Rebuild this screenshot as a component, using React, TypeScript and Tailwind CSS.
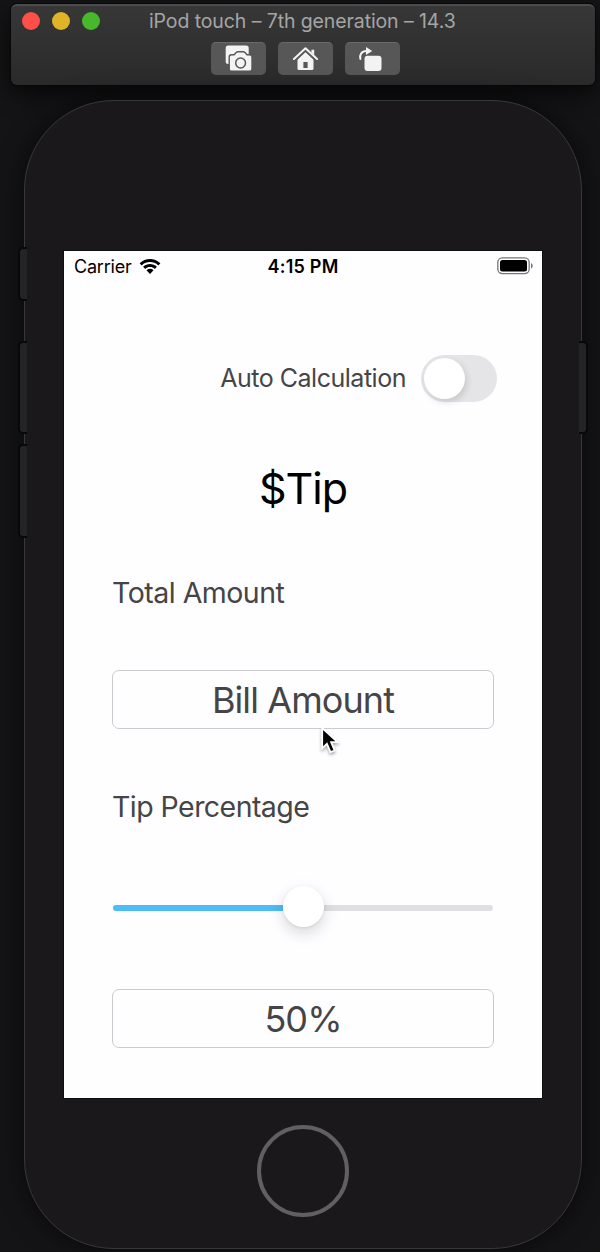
import React from "react";

function TrafficLights() {
  return (
    <div className="flex w-[78px] gap-3">
      <span className="size-[18px] rounded-full bg-[#fe4f48]" />
      <span className="size-[18px] rounded-full bg-[#e1b427]" />
      <span className="size-[18px] rounded-full bg-[#46b82a]" />
    </div>
  );
}

function ToolButton({ children }: { children: React.ReactNode }) {
  return (
    <button className="flex h-[33px] w-[55px] items-center justify-center rounded-[5px] border-t border-[#6a6a6b] bg-[#575758]">
      {children}
    </button>
  );
}

function ScreenshotIcon() {
  return (
    <svg className="-mt-px h-[33px] w-[55px]" viewBox="0 0 55 33">
      <rect x="14.7" y="3.500" width="23" height="18.500" rx="2.500" fill="#f3f3f3" />
      <path
        d="M20.600 12.700h2.600l2-2.100q.7-.8 1.700-.8h5.400q1 0 1.700.8l2 2.100h2.600q2.400 0 2.400 2.400v11.800q0 2.400-2.400 2.400h-18q-2.400 0-2.400-2.400V15.100q0-2.400 2.400-2.400Z"
        fill="#f3f3f3"
        stroke="#575758"
        strokeWidth="1.400"
      />
      <circle cx="29.600" cy="21" r="4.900" fill="none" stroke="#575758" strokeWidth="1.500" />
    </svg>
  );
}

function HomeIcon() {
  return (
    <svg className="-mt-px h-[33px] w-[55px]" viewBox="0 0 55 33">
      <path d="M33.400 7.800h2.800v7l-2.800-2.500Z" fill="#f3f3f3" />
      <path d="M27.500 9.600 19.500 17v9.400q0 1.600 1.600 1.600h12.800q1.600 0 1.600-1.600V17Z" fill="#f3f3f3" />
      <path d="m16 18.400 11.500-10.600L39 18.400" fill="none" stroke="#575758" strokeWidth="3.600" />
      <path d="m15.900 17 11.600-10.700L39.100 17" fill="none" stroke="#f3f3f3" strokeWidth="2" strokeLinecap="round" strokeLinejoin="round" />
      <rect x="25.400" y="20" width="4.200" height="6" fill="#575758" />
    </svg>
  );
}

function RotateIcon() {
  return (
    <svg className="-mt-px h-[33px] w-[55px]" viewBox="0 0 55 33">
      <rect x="19.500" y="13.700" width="17" height="15.300" rx="3" fill="#f3f3f3" />
      <path d="M15.400 17c-1-4.500 1.200-8 6-8" fill="none" stroke="#f3f3f3" strokeWidth="2" strokeLinecap="round" />
      <path d="M21 5v8l6.200-4Z" fill="#f3f3f3" />
    </svg>
  );
}

function Toolbar() {
  return (
    <header className="mt-[4px] ml-[11px] h-[81px] w-[584px] rounded-[6px] border-t-2 border-[#4b4b4c] bg-linear-to-b from-[#373738] to-[#2a2a2b] shadow-[0_0_0_1px_#070708,0_8px_22px_#000000b0]">
      <div className="flex h-[30px] items-center pl-[11px]">
        <TrafficLights />
        <span className="ml-[49px] pt-px text-[19.500px] tracking-[-0.1px] whitespace-nowrap text-[#a5a5a6]">
          iPod touch – 7th generation – 14.3
        </span>
      </div>
      <div className="mt-[6px] ml-[200px] flex gap-3">
        <ToolButton>
          <ScreenshotIcon />
        </ToolButton>
        <ToolButton>
          <HomeIcon />
        </ToolButton>
        <ToolButton>
          <RotateIcon />
        </ToolButton>
      </div>
    </header>
  );
}

function StatusBar() {
  return (
    <div className="grid h-[31px] grid-cols-3 items-center pr-[9px] pl-[10px] text-[18px] text-black">
      <div className="flex items-center gap-[7px]">
        <span className="tracking-[-0.2px]">Carrier</span>
        <svg className="-mt-px h-[17px] w-[22px]" viewBox="0 0 22 17">
          <path d="M.6 5.200C6.500-.5 15.500-.5 21.400 5.200l-2.100 2.200c-4.800-4.400-11.800-4.400-16.600 0Z" />
          <path d="M4.100 8.700c4-3.700 9.800-3.700 13.800 0l-2.100 2.200c-2.800-2.500-6.800-2.500-9.600 0Z" />
          <path d="M7.500 12.200c2-1.800 5-1.800 7 0L11 16Z" />
        </svg>
      </div>
      <span className="pr-[1px] text-center font-semibold tracking-[0.250px]">4:15 PM</span>
      <svg className="-mt-[2px] h-[18px] w-[36px] justify-self-end" viewBox="0 0 36 18">
        <rect x=".8" y=".9" width="31.400" height="15.700" rx="4.500" fill="none" stroke="#777" strokeWidth="1.300" />
        <rect x="3" y="3.100" width="27" height="11.300" rx="2.500" />
        <path d="M34 6v5.500q1.800-.8 1.800-2.700T34 6Z" fill="#777" />
      </svg>
    </div>
  );
}

function Pointer() {
  return (
    <svg className="absolute top-[727px] left-[321px] h-[30px] w-[22px] drop-shadow-[0_2px_1.500px_#00000055]" viewBox="0 0 22 30">
      <path d="M1.200 1v20.300l4.700-4.500 3.600 8.400 4.100-1.700-3.500-8.300h6.500Z" stroke="#fff" strokeWidth="1.800" />
    </svg>
  );
}

function Field({ children }: { children: React.ReactNode }) {
  return (
    <div className="flex h-[59px] w-[382px] items-center justify-center rounded-[7px] border border-[#cbcbcf] text-[36px] tracking-[-0.9px] text-[#454546]">
      {children}
    </div>
  );
}

function Screen() {
  return (
    <main className="mt-[150px] ml-[39px] flex h-[847px] w-[478px] flex-col bg-[#fefdff] shadow-[0_0_0_1px_#0e0d0f]">
      <StatusBar />
      <div className="mt-[73px] flex h-[47px] items-center justify-end gap-[15px] pr-[45px]">
        <span className="text-[25px] tracking-[-0.480px] text-[#454546]">Auto Calculation</span>
        <span className="flex h-[47px] w-[76px] items-center rounded-full bg-[#e5e5e7] pl-[3px]">
          <span className="size-[41px] rounded-full bg-white shadow-[2px_3px_7px_#00000022]" />
        </span>
      </div>
      <h1 className="mt-[56px] text-center text-[43px] leading-[60px] tracking-[-1px] text-black">$Tip</h1>
      <div className="flex flex-col px-[48px]">
        <h2 className="mt-[55px] text-[28.500px] leading-[40px] tracking-[-0.500px] text-[#454546]">Total Amount</h2>
        <div className="mt-[57px]">
          <Field>Bill Amount</Field>
        </div>
        <h2 className="mt-[58px] text-[28.500px] leading-[40px] tracking-[-0.550px] text-[#454546]">Tip Percentage</h2>
        <div className="mt-[58px] ml-px flex h-[42px] w-[380px] items-center">
          <span className="mt-[3px] h-[6px] flex-1 rounded-l-full bg-[#4dbcf8]" />
          <span className="z-10 size-[41px] rounded-full bg-white shadow-[0_6px_16px_#00000028,0_1px_3px_#00000014]" />
          <span className="mt-[3px] h-[6px] flex-1 rounded-r-full bg-[#dfdee0]" />
        </div>
        <div className="mt-[62px]">
          <Field>50%</Field>
        </div>
      </div>
    </main>
  );
}

function SideButton({ className }: { className: string }) {
  return <span className={"absolute w-[9px] border-2 border-[#08080a] bg-[#242427] " + className} />;
}

export default function App() {
  return (
    <div className="relative h-[1252px] w-[600px] overflow-hidden bg-[#141416] font-['Inter',sans-serif]">
      <Toolbar />
      <div className="relative mt-[15px] ml-[24px] h-[1149px] w-[558px] rounded-[90px] border border-[#38383a] bg-[#1a181b] shadow-[0_0_26px_#000000a0]">
        <Screen />
        <div className="mt-[27px] ml-[232px] size-[92px] rounded-full border-[4px] border-[#606062]" />
        <SideButton className="top-[146px] -left-[7px] h-[54px] rounded-l-[5px] border-r-0" />
        <SideButton className="top-[240px] -left-[7px] h-[93px] rounded-l-[5px] border-r-0" />
        <SideButton className="top-[343px] -left-[7px] h-[94px] rounded-l-[5px] border-r-0" />
        <SideButton className="top-[240px] left-[554px] h-[93px] rounded-r-[5px] border-l-0" />
      </div>
      <Pointer />
    </div>
  );
}
